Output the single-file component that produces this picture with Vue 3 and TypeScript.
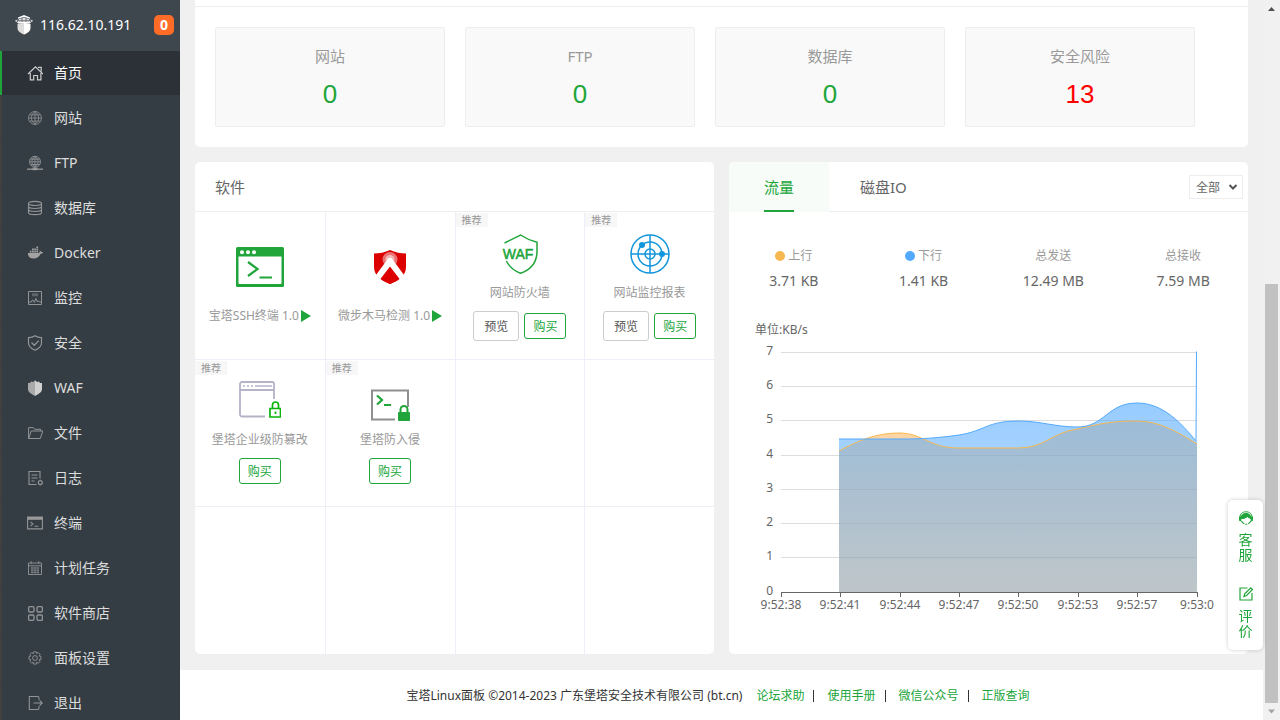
<script setup lang="ts">
import { ref } from 'vue'

interface Shape {
  d: string
  fill?: string
  width?: number
}

interface NavItem {
  label: string
  icon: Shape[]
}

interface Software {
  key: string
  name: string
  version?: string
  recommended?: boolean
  preview?: boolean
}

const globe = (r: number, cy: number): string =>
  `M${8 - r} ${cy}a${r} ${r} 0 1 0 ${2 * r} 0a${r} ${r} 0 1 0 ${-2 * r} 0ZM${8 - r} ${cy}h${2 * r}M8 ${cy - r}v${2 * r}` +
  `M8 ${cy - r}c${-r * 0.75} ${r * 0.6} ${-r * 0.75} ${r * 1.4} 0 ${2 * r}M8 ${cy - r}c${r * 0.75} ${r * 0.6} ${r * 0.75} ${r * 1.4} 0 ${2 * r}` +
  `M${8 - r * 0.85} ${cy - r * 0.48}h${r * 1.7}M${8 - r * 0.85} ${cy + r * 0.48}h${r * 1.7}`

const roundSquare = (x: number, y: number): string =>
  `M${x + 1.3} ${y}h2.8a1.3 1.3 0 0 1 1.3 1.3v2.8a1.3 1.3 0 0 1-1.3 1.3h-2.8a1.3 1.3 0 0 1-1.3-1.3v-2.8a1.3 1.3 0 0 1 1.3-1.3Z`

const nav: NavItem[] = [
  {
    label: '首页',
    icon: [
      { d: 'M1 9 8.5 1.8 16 9M3.3 8v6.8h3.4v-4.3h3.8v4.3h3.4V8M11 2.4h3.2v4.2', width: 1.2 },
    ],
  },
  { label: '网站', icon: [{ d: globe(6.5, 8), width: 0.8 }] },
  {
    label: 'FTP',
    icon: [
      { d: globe(5.5, 6.8), width: 0.9 },
      { d: 'M0 14.2h16', width: 1.4 },
      { d: 'M5.500 12.8h5v2.4h-5Z', fill: '#999' },
    ],
  },
  {
    label: '数据库',
    icon: [
      {
        d: 'M1.5 3.5C1.5.7 14.5.7 14.5 3.5C14.5 6.1 1.5 6.1 1.5 3.5ZM1.5 3.5v9.2c0 2.6 13 2.6 13 0V3.5M1.5 6.5c0 2.6 13 2.6 13 0M1.5 9.6c0 2.6 13 2.6 13 0',
        width: 1.1,
      },
    ],
  },
  {
    label: 'Docker',
    icon: [
      {
        d: 'M1 8h11c.6-.3.9-1.2.7-2.5 1 .4 1.3 1 1.4 1.6.8-.2 1.5-.1 2 .2-.6 1.2-1.5 1.5-2.6 1.5C12.3 11.8 10 13.5 6.6 13.5 3 13.5.8 11.9 1 8ZM2.8 5.7h1.7v1.7H2.8ZM5 5.7h1.7v1.7H5ZM7.2 5.7h1.7v1.7H7.2ZM9.4 5.7h1.7v1.7H9.4ZM7.2 3.6h1.7v1.6H7.2ZM5 3.6h1.7v1.6H5ZM9.4 3.6h1.7v1.6H9.4ZM9.4 1.5h1.7v1.6H9.4Z',
        fill: '#a3a3a3',
      },
    ],
  },
  {
    label: '监控',
    icon: [
      { d: 'M1.5 1.5h13v13h-13Z', width: 1 },
      { d: 'M5 3.3h6v3H5Z', fill: '#5f666c' },
      { d: 'M2 12h2.2l1.4-2.2 1.7 2.6 1.6-4 1.6 3.6 1-1.2 1 1.2H14', width: 1 },
    ],
  },
  {
    label: '安全',
    icon: [
      { d: 'M8 .8C5.8 2.4 3.8 2.6 1.5 2.6V8c0 3.5 3 5.7 6.5 7.2 3.5-1.5 6.5-3.7 6.5-7.2V2.6C12.2 2.6 10.2 2.4 8 .8Z', width: 1.2 },
      { d: 'M4.5 7.5 7.3 10.3 11.8 5.6', width: 1.3 },
    ],
  },
  {
    label: 'WAF',
    icon: [
      { d: 'M8 .3 6 2 4 1.5 3 3H1v6c0 3.3 3.5 5 7 7Z', fill: '#a9a9a9' },
      { d: 'M8 .3 10 2l2-.5L13 3h2v6c0 3.3-3.5 5-7 7Z', fill: '#d0d0d0' },
    ],
  },
  {
    label: '文件',
    icon: [{ d: 'M1.6 13.5V2.6h4.7l1.4 1.7h6V6M1.6 13.5 4.2 6h11.6l-2.5 7.5Z', width: 1 }],
  },
  {
    label: '日志',
    icon: [
      { d: 'M13 8.5V1.5H2v13h7.5M4.5 5h6M4.5 8h6M4.5 11h3', width: 1.1 },
      { d: 'M11.3 12.6a2 2 0 1 0 4 0a2 2 0 1 0-4 0ZM13.3 9.7v1M13.3 14.5v1', width: 1.2 },
    ],
  },
  {
    label: '终端',
    icon: [
      { d: 'M.6 2.1h14.8v11.8H.6Z', width: 1.1 },
      { d: 'M.6 2h14.8v2.8H.6Z', fill: '#999' },
      { d: 'M3.5 6.8 6 9l-2.5 2.2M7.5 11.2h3.8', width: 1.1 },
    ],
  },
  {
    label: '计划任务',
    icon: [
      { d: 'M1.5 3h13v11.5h-13ZM1.5 5.8h13M4.2 1.2v2.6M11.8 1.2v2.6', width: 0.9 },
      { d: 'M4 8h8M4 10.2h8M4 12.4h8M5 7v6.5M8 7v6.5M11 7v6.5', width: 0.7 },
    ],
  },
  {
    label: '软件商店',
    icon: [
      {
        d: roundSquare(1.6, 1.6) + roundSquare(10, 1.6) + roundSquare(1.6, 10) + roundSquare(10, 10),
        width: 1.3,
      },
    ],
  },
  {
    label: '面板设置',
    icon: [
      {
        d: 'M6.7 1.8h2.6l.4 1.8 1.6-1 1.8 1.8-1 1.6 1.9.5v2.8l-1.9.5 1 1.6-1.8 1.8-1.6-1-.4 1.9H6.7l-.4-1.9-1.6 1-1.8-1.8 1-1.6L2 9.300V6.500l1.900-.5-1-1.600 1.800-1.800 1.600 1Z',
        width: 0.9,
      },
      { d: 'M5.6 8a2.4 2.4 0 1 0 4.8 0a2.4 2.4 0 1 0-4.8 0Z', width: 0.9 },
    ],
  },
  {
    label: '退出',
    icon: [{ d: 'M12 4.8V3a1.5 1.5 0 0 0-1.5-1.5H2.3v13h8.200A1.5 1.5 0 0 0 12 13v-1.800M6.500 8h8.700M12.600 5.300 15.300 8l-2.700 2.700', width: 1.1 }],
  },
]

const summary = [
  { label: '网站', value: 0 },
  { label: 'FTP', value: 0 },
  { label: '数据库', value: 0 },
  { label: '安全风险', value: 13, danger: true },
]

const software: Software[] = [
  { key: 'ssh', name: '宝塔SSH终端', version: '1.0' },
  { key: 'trojan', name: '微步木马检测', version: '1.0' },
  { key: 'waf', name: '网站防火墙', recommended: true, preview: true },
  { key: 'radar', name: '网站监控报表', recommended: true, preview: true },
  { key: 'tamper', name: '堡塔企业级防篡改', recommended: true },
  { key: 'intrusion', name: '堡塔防入侵', recommended: true },
]
const emptyCells = 6

const traffic = [
  { label: '上行', value: '3.71 KB', dot: 'up' },
  { label: '下行', value: '1.41 KB', dot: 'down' },
  { label: '总发送', value: '12.49 MB' },
  { label: '总接收', value: '7.59 MB' },
]

const yAxis = [
  { label: '7', y: 40 },
  { label: '6', y: 74 },
  { label: '5', y: 108 },
  { label: '4', y: 143 },
  { label: '3', y: 177 },
  { label: '2', y: 211 },
  { label: '1', y: 245 },
  { label: '0', y: 280 },
]
const xAxis = [
  { label: '9:52:38', x: 52 },
  { label: '9:52:41', x: 111 },
  { label: '9:52:44', x: 171 },
  { label: '9:52:47', x: 230 },
  { label: '9:52:50', x: 289 },
  { label: '9:52:53', x: 349 },
  { label: '9:52:57', x: 408 },
  { label: '9:53:0', x: 468 },
]

const upLine =
  'M110 139C130 128 148 121 170 121C194 121 200 136 230 136H289C316 136 322 121 348 117C370 112 382 109 408 109C430 109 449 120 468 132'
const downLine =
  'M110 127H170C196 127 208 126 230 123C256 119 258 109 289 109C312 109 326 115 348 115C376 115 378 91 408 91C434 91 452 111 467 129'

const footerLinks = ['论坛求助', '使用手册', '微信公众号', '正版查询']
const tabs = ['流量', '磁盘IO']
const activeTab = ref(0)
const activeNav = ref(0)
const network = ref('all')
</script>

<template>
  <div class="page">
    <aside class="sidebar">
      <header class="server">
        <svg class="logo" viewBox="0 0 18 20" aria-hidden="true">
          <path d="M9 0 3 2.500V4l6-2 6 2V2.500Z" fill="#fff" />
          <path d="M0 5.500 9 2.500l9 3-1 1.500H1Z" fill="#ddd" />
          <path d="M2 7h14l-1 1.500H3Z" fill="#fff" />
          <path d="M2.500 9 9 7.800V19.500C5 18 2.500 16 2.500 13Z" fill="#ddd" />
          <path d="M15.500 9 9 7.800V19.500c4-1.500 6.500-3.500 6.500-6.500Z" fill="#fff" />
          <path d="M4 3.500 2 7M14 3.500 16 7M7 2.500v4M11 2.500v4M2 5.800h14" fill="none" stroke="#3d454c" stroke-width=".7" />
        </svg>
        <span class="ip">116.62.10.191</span>
        <span class="badge">0</span>
      </header>
      <nav class="menu">
        <a
          v-for="(item, i) in nav"
          :key="item.label"
          href="#"
          class="menu-item"
          :class="{ active: i === activeNav }"
          @click.prevent="activeNav = i"
        >
          <svg class="menu-icon" viewBox="0 0 16 16" aria-hidden="true">
            <path
              v-for="(s, n) in item.icon"
              :key="n"
              :d="s.d"
              :fill="s.fill ?? 'none'"
              :stroke="s.fill ? 'none' : 'currentColor'"
              :stroke-width="s.width ?? 1"
            />
          </svg>
          <span>{{ item.label }}</span>
        </a>
      </nav>
    </aside>

    <div class="content">
      <main class="main">
        <section class="card overview">
          <ul class="summary">
            <li v-for="s in summary" :key="s.label">
              <p class="summary-label">{{ s.label }}</p>
              <a href="#" class="summary-value" :class="{ danger: s.danger }">{{ s.value }}</a>
            </li>
          </ul>
        </section>

        <div class="columns">
          <section class="card">
            <h2 class="card-title">软件</h2>
            <div class="software">
              <div v-for="app in software" :key="app.key" class="cell" :class="{ promo: app.recommended }">
                <span v-if="app.recommended" class="tag">推荐</span>
                <div class="cell-icon">
                  <svg v-if="app.key === 'ssh'" width="48" height="40" viewBox="0 0 48 40">
                    <rect width="48" height="40" rx="1.500" fill="#20a53a" />
                    <path d="M2.500 9.500h43V36a1 1 0 0 1-1 1h-41a1 1 0 0 1-1-1Z" fill="#fff" />
                    <g fill="#fff"><circle cx="6" cy="5.300" r="2" /><circle cx="12" cy="5.300" r="2" /><circle cx="18" cy="5.300" r="2" /></g>
                    <path d="M12 15l9.500 7-9.500 7M23.500 30.500H36" fill="none" stroke="#20a53a" stroke-width="2.200" />
                  </svg>
                  <svg v-else-if="app.key === 'trojan'" width="34" height="36" viewBox="0 0 34 36">
                    <path d="M17 1C12 3.500 6 4.500 1 4.500V18c0 9 8 14 16 17 8-3 16-8 16-17V4.500C28 4.500 22 3.500 17 1Z" fill="#dc0000" />
                    <circle cx="17" cy="10.500" r="7.500" fill="#fff" opacity=".45" />
                    <circle cx="17" cy="10.500" r="4.500" fill="#fff" opacity=".5" />
                    <path d="M15.500 9h3L31 26l-4 4.500-10-13-10 13L3 26Z" fill="#fff" />
                    <path d="M17 20 24.500 31.500 17 35 9.500 31.500Z" fill="#dc0000" />
                  </svg>
                  <svg v-else-if="app.key === 'waf'" width="40" height="40" viewBox="0 0 40 40">
                    <path d="M4.500 9 20.500 1C25 4 30.500 6.500 37 8.200V17C37 30 30 36 20.500 39.200 13 36.500 9 32 6.300 27" fill="none" stroke="#20a53a" stroke-width="1.500" />
                    <text x="18" y="25" text-anchor="middle" class="waf-text">WAF</text>
                  </svg>
                  <svg v-else-if="app.key === 'radar'" width="40" height="40" viewBox="0 0 40 40">
                    <g fill="none" stroke="#1296db" stroke-width="1.500">
                      <circle cx="20" cy="20" r="19" /><circle cx="20" cy="20" r="12" /><circle cx="20" cy="20" r="5" />
                      <path d="M1 20h38M20 1v38" />
                    </g>
                    <circle cx="12" cy="11" r="3" fill="#1296db" /><circle cx="32" cy="20" r="3" fill="#1296db" />
                  </svg>
                  <svg v-else-if="app.key === 'tamper'" width="42" height="40" viewBox="0 0 42 40">
                    <path d="M26 35.500H3a2 2 0 0 1-2-2V3a2 2 0 0 1 2-2h30a2 2 0 0 1 2 2v15M1 9h34" fill="none" stroke="#b5b3c8" stroke-width="1.800" />
                    <path d="M4 5h2M8 5h2M12 5h2M16 5h17" stroke="#b5b3c8" stroke-width="1.500" />
                    <path d="M31 27.500h10.500V36H31ZM33.500 27v-3a3 3 0 0 1 6 0v3M36.500 30.500v2.500" fill="none" stroke="#09b509" stroke-width="1.700" />
                  </svg>
                  <svg v-else width="40" height="40" viewBox="0 0 40 40">
                    <path d="M25 38.500H2V9.500h36v16.500" fill="none" stroke="#8f8f8f" stroke-width="2" />
                    <path d="M7 14.500 12 19l-5 4.500M14 24h7" fill="none" stroke="#20a53a" stroke-width="2.200" />
                    <rect x="28" y="31" width="12" height="9" rx="1" fill="#20a53a" />
                    <path d="M30.500 31v-2.500a3.500 3.500 0 0 1 7 0V31" fill="none" stroke="#20a53a" stroke-width="2" />
                  </svg>
                </div>
                <p class="cell-name">
                  <span>{{ app.version ? `${app.name} ${app.version}` : app.name }}</span>
                  <svg v-if="app.version" class="play" viewBox="0 0 10 12" aria-hidden="true"><path d="M0 0 10 6 0 12Z" fill="#20a53a" /></svg>
                </p>
                <div v-if="app.recommended" class="actions">
                  <button v-if="app.preview" type="button" class="btn preview">预览</button>
                  <button type="button" class="btn buy">购买</button>
                </div>
              </div>
              <div v-for="n in emptyCells" :key="n" class="cell"></div>
            </div>
          </section>

          <section class="card">
            <div class="tabbar">
              <button
                v-for="(tab, i) in tabs"
                :key="tab"
                type="button"
                class="tab"
                :class="{ on: i === activeTab }"
                @click="activeTab = i"
              ><span>{{ tab }}</span></button>
              <div class="picker">
                <select v-model="network" aria-label="网卡">
                  <option value="all">全部</option>
                </select>
                <svg viewBox="0 0 10 8" aria-hidden="true"><path d="M1.500 2 5 5.500 8.500 2" fill="none" stroke="#555" stroke-width="2" /></svg>
              </div>
            </div>
            <dl class="traffic">
              <div v-for="t in traffic" :key="t.label">
                <dt><i v-if="t.dot" class="dot" :class="t.dot"></i>{{ t.label }}</dt>
                <dd>{{ t.value }}</dd>
              </div>
            </dl>
            <svg class="chart" viewBox="0 0 519 342" role="img" aria-label="流量">
              <defs>
                <linearGradient id="upFill" gradientUnits="userSpaceOnUse" x1="0" y1="120" x2="0" y2="280">
                  <stop offset="0" stop-color="#fba237" stop-opacity=".45" />
                  <stop offset="1" stop-color="#d59b56" stop-opacity=".45" />
                </linearGradient>
                <linearGradient id="downFill" gradientUnits="userSpaceOnUse" x1="0" y1="90" x2="0" y2="280">
                  <stop offset="0" stop-color="#52a9ff" stop-opacity=".6" />
                  <stop offset="1" stop-color="#52a9ff" stop-opacity=".3" />
                </linearGradient>
              </defs>
              <text x="26" y="22" class="axis-text">单位:KB/s</text>
              <g v-for="t in yAxis" :key="t.label">
                <path :d="`M52 ${t.y + 0.5}H468`" :stroke="t.label === '0' ? '#666' : '#ddd'" />
                <text x="44" :y="t.y + 3" text-anchor="end" class="axis-text">{{ t.label }}</text>
              </g>
              <path :d="`${upLine}V280H110Z`" fill="url(#upFill)" />
              <path :d="`${downLine}H468V280H110Z`" fill="url(#downFill)" />
              <path :d="upLine" fill="none" stroke="#f7b851" />
              <path :d="`${downLine}L467.500 39.500`" fill="none" stroke="#52a9ff" />
              <g v-for="t in xAxis" :key="t.label">
                <path :d="`M${t.x + 0.5} 280V285`" stroke="#666" />
                <text :x="t.x" y="297" text-anchor="middle" class="axis-text">{{ t.label }}</text>
              </g>
              <path d="M52 280.500H468" stroke="#666" />
            </svg>
          </section>
        </div>
      </main>

      <footer class="footer">
        <span class="copyright">宝塔Linux面板 ©2014-2023 广东堡塔安全技术有限公司 (bt.cn)</span>
        <a v-for="link in footerLinks" :key="link" href="#">{{ link }}</a>
      </footer>
    </div>

    <div class="scrollbar" aria-hidden="true">
      <svg viewBox="0 0 17 17"><path d="M5 11 8.500 7 12 11Z" fill="#505050" /></svg>
      <div class="track"></div>
      <div class="thumb"></div>
      <svg viewBox="0 0 17 17"><path d="M5 6.500 8.500 10.500 12 6.500Z" fill="#a3a3a3" /></svg>
    </div>

    <div class="helper">
      <button type="button">
        <svg viewBox="0 0 16 16" aria-hidden="true">
          <path d="M2 7.500C2 3.500 4.500 1.800 8 1.800s6 1.700 6 5.700" fill="none" stroke="#20a53a" stroke-width="1" />
          <path d="M2.800 9C2.500 5 4.800 3 8 3s5.500 2 5.200 6C11.500 8.700 10.300 7.800 9.600 6.900 8 8.300 5.500 9.200 2.800 9Z" fill="#20a53a" />
          <path d="M1 6.500h2.300v4.700H2.300A1.300 1.300 0 0 1 1 9.900ZM15 6.500h-2.300v4.700h1a1.300 1.300 0 0 0 1.300-1.300Z" fill="#20a53a" />
          <path d="M3.500 11c.8 1.500 1.700 2.300 2.800 2.700M12.800 11c-.7 1.400-1.600 2.200-2.600 2.700M7.300 14.300h2" fill="none" stroke="#20a53a" stroke-width="1.100" />
        </svg>
        <span>客服</span>
      </button>
      <button type="button">
        <svg viewBox="0 0 16 16" aria-hidden="true">
          <path d="M9.500 2H2v12h12V7M6 10.500l.7-2.800L12.800 1.800l1.700 1.700L8.600 9.500ZM6 10.500 8.600 9.500" fill="none" stroke="#20a53a" stroke-width="1.200" />
        </svg>
        <span>评价</span>
      </button>
    </div>
  </div>
</template>

<style>
html,
body {
  margin: 0;
  overflow: hidden;
}
</style>

<style scoped>
* {
  box-sizing: border-box;
}
.page {
  display: flex;
  height: 100vh;
  overflow: hidden;
  background: #f0f0f0;
  color: #666;
  font: 12px/20px 'Noto Sans', 'Noto Sans CJK SC', sans-serif;
}
button,
select {
  font: inherit;
  color: inherit;
}
a {
  color: #20a53a;
  text-decoration: none;
}
p,
h2,
ul,
dl,
dd {
  margin: 0;
  padding: 0;
}
.sidebar {
  flex: 0 0 180px;
  background: #353d44;
  overflow: hidden;
}
.server {
  display: flex;
  align-items: center;
  height: 51px;
  padding: 0 6px 2px 15px;
  background: #3e464e;
  color: #fff;
  font-size: 14px;
}
.logo {
  width: 18px;
  height: 20px;
  margin-right: 7px;
}
.badge {
  width: 20px;
  height: 20px;
  margin-left: auto;
  border-radius: 5px;
  background: #ff6c28;
  font-weight: bold;
  text-align: center;
}
.menu-item {
  display: flex;
  align-items: center;
  gap: 11px;
  height: 44px;
  margin-bottom: 1px;
  padding-left: 25px;
  border-left: 2px solid #413f40;
  color: #ddd;
  font-size: 14px;
}
.menu-item.active {
  border-color: #20a53a;
  background: #2c3138;
  color: #fff;
}
.menu-icon {
  width: 16px;
  height: 16px;
  color: #929597;
}
.active .menu-icon {
  color: #ccc;
}
.content {
  flex: 1;
  min-width: 0;
  display: flex;
  flex-direction: column;
}
.main {
  padding: 0 15px 16px;
}
.card {
  border-radius: 5px;
  background: #fff;
}
.overview {
  margin-bottom: 15px;
  padding-top: 6px;
  border-radius: 0 0 5px 5px;
}
.summary {
  display: grid;
  grid-template-columns: repeat(4, 1fr);
  gap: 20px;
  padding: 20px 53px 20px 20px;
  border-top: 1px solid #eee;
  list-style: none;
}
.summary li {
  height: 100px;
  padding-top: 17px;
  border: 1px solid #eee;
  border-radius: 2px;
  background: #f9f9f9;
  text-align: center;
}
.summary-label {
  color: #999;
  font-size: 15px;
  line-height: 22px;
}
.summary-value {
  display: block;
  margin-top: 9px;
  font: 26px/36px 'Liberation Sans', sans-serif;
}
.summary-value.danger {
  color: #f00;
}
.columns {
  display: grid;
  grid-template-columns: 1fr 1fr;
  gap: 15px;
}
.card-title {
  height: 50px;
  padding-left: 20px;
  border-bottom: 1px solid #eee;
  font-size: 15px;
  font-weight: normal;
  line-height: 50px;
}
.software {
  display: grid;
  grid-template-columns: repeat(4, 1fr);
  grid-template-rows: 147px 147px 148px;
}
.cell {
  position: relative;
  display: flex;
  flex-direction: column;
  align-items: center;
  padding-top: 31px;
  border-top: 1px solid #eeeef8;
  border-left: 1px solid #eeeef8;
  color: #999;
}
.cell:nth-child(4n + 1) {
  border-left: 0;
}
.cell:nth-child(-n + 4) {
  border-top: 0;
}
.cell.promo {
  padding-top: 22px;
}
.cell.promo:nth-child(n + 5) {
  padding-top: 21px;
}
.cell-icon {
  display: flex;
  align-items: center;
  height: 48px;
  margin-bottom: 15px;
}
.promo .cell-icon {
  height: 40px;
  margin-bottom: 9px;
}
.cell-name {
  display: flex;
  align-items: center;
  gap: 2px;
}
.waf-text {
  font: 14px 'Liberation Sans', sans-serif;
  fill: #20a53a;
  stroke: #20a53a;
  stroke-width: 0.5;
}
.play {
  width: 10px;
  height: 12px;
}
.tag {
  position: absolute;
  top: 1px;
  left: 0;
  padding: 0 6px;
  background: #f7f7f7;
  font-size: 10px;
  line-height: 14px;
}
.actions {
  display: flex;
  align-items: center;
  gap: 5px;
  margin-top: 8px;
}
.btn {
  height: 26px;
  padding: 1px 8px 0;
  border: 1px solid #20a53a;
  border-radius: 3px;
  background: #fff;
  color: #20a53a;
}
.btn.preview {
  height: 30px;
  padding: 1px 10px 0;
  border-color: #ccc;
  color: #555;
}
.tabbar {
  display: flex;
  height: 50px;
  border-bottom: 1px solid #eee;
}
.tab {
  min-width: 100px;
  height: 50px;
  padding: 0 31px;
  border: 0;
  background: none;
  font-size: 15px;
}
.tab span {
  display: inline-block;
  height: 50px;
  line-height: 50px;
}
.tab.on {
  border-radius: 5px 0 0 0;
  background: #f7fcf8;
  color: #20a53a;
}
.tab.on span {
  border-bottom: 2px solid #20a53a;
}
.picker {
  position: relative;
  width: 54px;
  height: 24px;
  margin: 13px 5px 0 auto;
}
.picker select {
  width: 100%;
  height: 100%;
  padding: 1px 6px 0;
  border: 1px solid #eee;
  background: #fff;
  appearance: none;
}
.picker svg {
  position: absolute;
  top: 8px;
  right: 5px;
  width: 10px;
  height: 8px;
  pointer-events: none;
}
.traffic {
  display: grid;
  grid-template-columns: repeat(4, 1fr);
  padding-top: 34px;
  height: 100px;
  text-align: center;
}
.traffic dt {
  color: #999;
}
.traffic dd {
  margin-top: 5px;
  font-size: 14px;
}
.dot {
  display: inline-block;
  width: 10px;
  height: 10px;
  margin-right: 3px;
  border-radius: 50%;
  vertical-align: -1px;
}
.dot.up {
  background: #f7b851;
}
.dot.down {
  background: #52a9ff;
}
.chart {
  display: block;
  width: 100%;
}
.axis-text {
  fill: #666;
  font-size: 12px;
}
.footer {
  display: flex;
  justify-content: center;
  flex: 1 0 50px;
  padding: 16px 7px 0 0;
  background: #fff;
  color: #333;
}
.copyright {
  margin-right: 14px;
}
.footer a + a::before {
  content: '';
  display: inline-block;
  width: 1px;
  height: 12px;
  margin: 0 13px 0 9px;
  background: #333;
  vertical-align: -2px;
}
.scrollbar {
  flex: 0 0 17px;
  display: flex;
  flex-direction: column;
  background: #f1f1f1;
}
.scrollbar svg {
  flex: 0 0 17px;
}
.track {
  flex: 267;
}
.thumb {
  flex: 419;
  margin: 0 2px;
  background: #c1c1c1;
}
.helper {
  position: fixed;
  right: 17px;
  bottom: 70px;
  display: flex;
  flex-direction: column;
  gap: 24px;
  width: 35px;
  padding: 10px 0 12px;
  border-radius: 5px;
  background: #fff;
  box-shadow: 0 0 4px rgba(0, 0, 0, 0.2);
}
.helper button {
  display: flex;
  flex-direction: column;
  align-items: center;
  gap: 6px;
  padding: 0;
  border: 0;
  background: none;
  color: #20a53a;
  font-size: 14px;
  line-height: 15px;
}
.helper svg {
  width: 16px;
  height: 16px;
}
.helper span {
  width: 14px;
  word-break: break-all;
}
</style>
